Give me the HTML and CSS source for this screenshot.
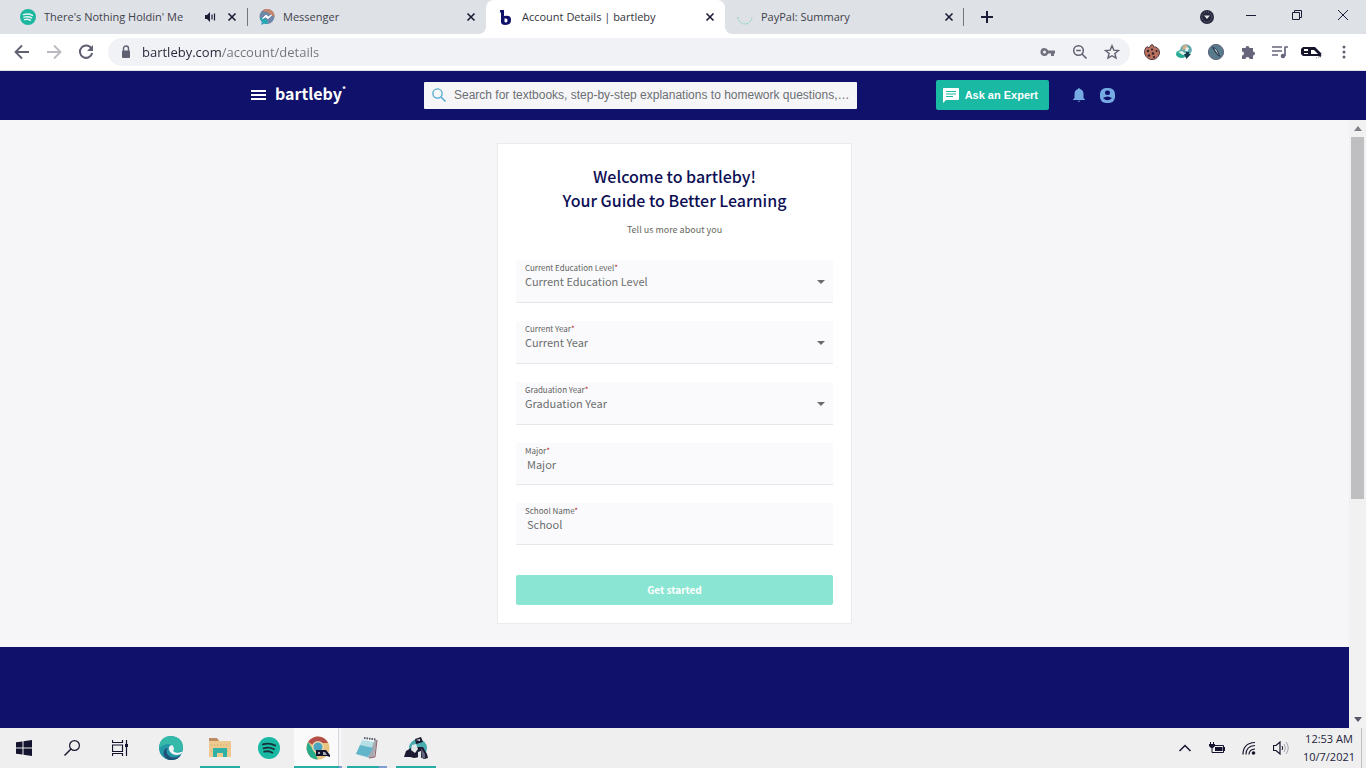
FILE: index.html
```html
<!DOCTYPE html>
<html lang="en">
<head>
  <meta charset="UTF-8">
  <meta name="viewport" content="width=device-width, initial-scale=1.0">
  <title>Account Details | bartleby</title>
  <link rel="stylesheet" href="styles.css">
</head>
<body>
  <!-- Tabs -->
  <div class="tab-strip">
    <div class="tab">
      <svg class="favicon" viewBox="0 0 16 16"><circle cx="8" cy="8" r="8" fill="#1db79f"/><path d="M3.500 5.600q5-1.400 9 .8M4 8.200q4.200-1.200 7.600.7M4.500 10.600q3.400-.9 6 .7" fill="none" stroke="#e8f5f5" stroke-width="1.400" stroke-linecap="round"/></svg>
      <span class="tab-title">There's Nothing Holdin' Me</span>
      <button class="icon-btn mute" aria-label="Mute tab"><svg width="12" height="12" viewBox="0 0 12 12"><path d="M1 4h2l3-3v10l-3-3h-2z" fill="#1d1b35"/><path d="M8 3.500v5M10.500 2.500v7" stroke="#1d1b35" stroke-width="1.200"/></svg></button>
      <button class="icon-btn close" aria-label="Close tab"><svg width="10" height="10" viewBox="0 0 10 10"><path d="M1.500 1.500l7 7M8.500 1.500l-7 7" stroke="#1d1b35" stroke-width="1.600"/></svg></button>
    </div>
    <div class="tab tab-line">
      <svg class="favicon" viewBox="0 0 16 16"><circle cx="8" cy="7.500" r="7.500" fill="#6f87a8"/><path d="M3 2a7.500 7.500 0 0 1 12.500 6L11 5 8 3z" fill="#c68468"/><path d="M.8 9a7.500 7.500 0 0 0 7.700 6v-4L4 9z" fill="#25a9b5"/><path d="M2.500 13v3l3-1.500z" fill="#3a9cc2"/><path d="M3.500 9.500l3.500-3.500 2.200 2 3.300-2-3.500 3.700-2.200-1.900z" fill="#fff" stroke="#fff"/></svg>
      <span class="tab-title">Messenger</span>
      <button class="icon-btn close" aria-label="Close tab"><svg width="10" height="10" viewBox="0 0 10 10"><path d="M1.500 1.500l7 7M8.500 1.500l-7 7" stroke="#1d1b35" stroke-width="1.600"/></svg></button>
    </div>
    <div class="tab tab-active">
      <svg class="favicon" viewBox="0 0 16 16"><path d="M2 1h4v6q7-1.500 7 4 0 5-5.500 5Q3 16 3 13V4L2 3zM6.500 9.500v3q0 1 1.500 1t1.500-2T8 9.500z" fill="#10116a" fill-rule="evenodd"/></svg>
      <span class="tab-title">Account Details | bartleby</span>
      <button class="icon-btn close" aria-label="Close tab"><svg width="10" height="10" viewBox="0 0 10 10"><path d="M1.500 1.500l7 7M8.500 1.500l-7 7" stroke="#1d1b35" stroke-width="1.600"/></svg></button>
    </div>
    <div class="tab tab-end">
      <svg class="favicon" viewBox="0 0 16 16"><path d="M1 8a7 7 0 0 0 14 0" fill="none" stroke="#7fd6bd" stroke-dasharray="2 1"/></svg>
      <span class="tab-title">PayPal: Summary</span>
      <button class="icon-btn close" aria-label="Close tab"><svg width="10" height="10" viewBox="0 0 10 10"><path d="M1.500 1.500l7 7M8.500 1.500l-7 7" stroke="#1d1b35" stroke-width="1.600"/></svg></button>
    </div>
    <button class="icon-btn new-tab" aria-label="New tab"><svg width="12" height="12" viewBox="0 0 12 12"><path d="M6 0v12M0 6h12" stroke="#1d1b35" stroke-width="2"/></svg></button>
    <div class="window-controls">
      <button class="icon-btn guest" aria-label="Tab search"><svg width="14" height="14" viewBox="0 0 14 14"><circle cx="7" cy="7" r="7" fill="#25253b"/><circle cx="7" cy="7" r="5" fill="none" stroke="#777b88" stroke-dasharray="1 1"/><path d="M4 5.500h6l-3 3.500z" fill="#e4e6eb"/></svg></button>
      <button class="icon-btn" aria-label="Minimize"><svg width="10" height="10" viewBox="0 0 10 10"><path d="M0 5.500h10" stroke="#1d1b35"/></svg></button>
      <button class="icon-btn" aria-label="Restore"><svg width="10" height="10" viewBox="0 0 10 10"><path d="M.5 2.500h7v7h-7zM2.500 2.500v-2h7v7h-2" fill="none" stroke="#1d1b35"/></svg></button>
      <button class="icon-btn" aria-label="Close"><svg width="10" height="10" viewBox="0 0 10 10"><path d="M0 0l10 10M10 0L0 10" stroke="#1d1b35"/></svg></button>
    </div>
  </div>

  <!-- Toolbar -->
  <div class="toolbar">
    <button class="icon-btn tool" aria-label="Back"><svg width="16" height="16" viewBox="0 0 16 16"><path d="M15 8H2M8 1.500L1.500 8 8 14.500" fill="none" stroke="#5f6071" stroke-width="1.800"/></svg></button>
    <button class="icon-btn tool" aria-label="Forward"><svg width="16" height="16" viewBox="0 0 16 16"><path d="M1 8h13M8 1.500L14.500 8 8 14.500" fill="none" stroke="#b9bac0" stroke-width="1.800"/></svg></button>
    <button class="icon-btn tool" aria-label="Reload"><svg width="16" height="16" viewBox="0 0 16 16"><path d="M13.500 4.500A6.200 6.200 0 1 0 14.200 9" fill="none" stroke="#5f6071" stroke-width="2"/><path d="M15 1v6H9z" fill="#5f6071"/></svg></button>
    <div class="address">
      <svg class="lock" width="10" height="14" viewBox="0 0 10 14"><path d="M2.500 6V3.500a2.500 2.500 0 0 1 5 0V6" fill="none" stroke="#5f6071" stroke-width="1.400"/><rect x="1" y="5.500" width="8" height="7.500" rx="1" fill="#5f6071"/></svg>
      <input class="url" type="text" aria-label="Address" value="bartleby.com/account/details">
      <button class="icon-btn tool" aria-label="Saved passwords"><svg width="16" height="16" viewBox="0 0 16 16"><path d="M4.500 4a4 4 0 1 0 3.700 5.400H11V12h3V9.400h1V6.600H8.200A4 4 0 0 0 4.500 4zm0 2.500a1.500 1.500 0 1 1 0 3 1.500 1.500 0 0 1 0-3z" fill="#70717c" fill-rule="evenodd"/></svg></button>
      <button class="icon-btn tool" aria-label="Zoom"><svg width="16" height="16" viewBox="0 0 16 16"><circle cx="6.500" cy="6.500" r="4.800" fill="none" stroke="#5f6071" stroke-width="1.500"/><path d="M4.200 6.500h4.600M10 10l4.500 4.500" stroke="#5f6071" stroke-width="1.600"/></svg></button>
      <button class="icon-btn tool" aria-label="Bookmark this page"><svg width="16" height="16" viewBox="0 0 16 16"><path d="M8 1.800l1.800 4.300 4.700.4-3.600 3 1.100 4.600L8 11.700l-4 2.400 1.100-4.600-3.600-3 4.700-.4z" fill="none" stroke="#5f6071" stroke-width="1.400"/></svg></button>
    </div>
    <button class="icon-btn tool" aria-label="Cookies extension"><svg width="16" height="16" viewBox="0 0 16 16"><path d="M7 1q2-1 2 0 0 3 3 2 4 2 3.500 6A7.500 7.500 0 1 1 3 2.500L5 4z" fill="#b9725f" stroke="#513a40"/><g fill="#33212c"><circle cx="4" cy="7" r="1.200"/><circle cx="8" cy="5.500" r="1.100"/><circle cx="9" cy="9.500" r="1.300"/><circle cx="12.500" cy="7" r="1"/><circle cx="5" cy="11.500" r="1.200"/><circle cx="10" cy="13" r="1.100"/></g></svg></button>
    <button class="icon-btn tool" aria-label="Download extension"><svg width="16" height="16" viewBox="0 0 16 16"><ellipse cx="5.500" cy="10" rx="5.500" ry="4" fill="#27ad95"/><circle cx="10" cy="6" r="5.800" fill="#5fa9ae"/><path d="M7 2q3-2 5 0l-2 3-4 1z" fill="#d9ae86"/><path d="M10 3l3 1-1 3-3 0z" fill="#e7f1f2"/><path d="M2 8l4-1 4 3-3 1z" fill="#e7eee9"/><path d="M8 10h2V8h3v2h2l-4.500 5z" fill="#173d4c"/></svg></button>
    <button class="icon-btn tool" aria-label="Notes extension"><svg width="16" height="16" viewBox="0 0 16 16"><circle cx="8" cy="8" r="7.600" fill="#587b8b" stroke="#5e6380"/><path d="M4.500 3l4 2.500 3.500 7-4-3z" fill="#eff3f5" stroke="#29394e"/><path d="M5 4l6 8" stroke="#29394e"/></svg></button>
    <button class="icon-btn tool" aria-label="Extensions"><svg width="16" height="16" viewBox="0 0 16 16"><path d="M2 4h3.500a2 2 0 1 1 4 0H13v3.500a2 2 0 1 1 0 4V15H9.500a2 2 0 0 0-4 0H2v-3.500a2 2 0 0 0 0-4z" fill="#66657c"/></svg></button>
    <button class="icon-btn tool" aria-label="Media controls"><svg width="16" height="16" viewBox="0 0 16 16"><path d="M0 3h10M0 7h10M0 11h6M13 3v9M12.300 3H16" stroke="#66657c" stroke-width="1.700"/><circle cx="11" cy="12" r="2.300" fill="#66657c"/></svg></button>
    <button class="icon-btn tool" aria-label="Profile"><svg width="22" height="16" viewBox="0 0 22 16"><path d="M2 3h12l6 6v4l-3-1H2L0 10V5z" fill="#17152c"/><path d="M3 5h4v2H3zM3 9h4v1H3zM10 6h3l4 4h-7z" fill="#fff"/><path d="M15 14l5-1 1-5" fill="none" stroke="#9b9da8" stroke-dasharray="1 1"/></svg></button>
    <button class="icon-btn tool" aria-label="Menu"><svg width="16" height="16" viewBox="0 0 16 16" fill="#5f6071"><circle cx="8" cy="3" r="1.500"/><circle cx="8" cy="8" r="1.500"/><circle cx="8" cy="13" r="1.500"/></svg></button>
  </div>

  <header class="site-header">
    <div class="header-inner">
      <button class="icon-btn menu-btn" aria-label="Open menu"><svg width="15" height="10" viewBox="0 0 15 10"><path d="M0 1h15M0 5h15M0 9h15" stroke="#fff" stroke-width="2"/></svg></button>
      <a class="logo" href="#">bartleby<span class="logo-mark">*</span></a>
      <div class="search">
        <svg width="14" height="14" viewBox="0 0 14 14"><circle cx="5.500" cy="5.500" r="4.600" fill="none" stroke="#4fa9cf" stroke-width="1.300"/><path d="M9 9l4.500 4.500" stroke="#4fa9cf" stroke-width="1.500"/></svg>
        <input class="search-input" type="text" aria-label="Search" placeholder="Search for textbooks, step-by-step explanations to homework questions, and more">
      </div>
      <button class="ask-btn">
        <svg width="16" height="15" viewBox="0 0 16 15"><path d="M1 0h14q1 0 1 1v10q0 1-1 1H3l-3 3V1q0-1 1-1z" fill="#fff"/><path d="M3 3.500h10M3 6h10M3 8.500h7" stroke="#19b9a3" stroke-width="1.200"/></svg>
        Ask an Expert
      </button>
      <button class="icon-btn bell" aria-label="Notifications"><svg width="12" height="14" viewBox="0 0 12 14" fill="#76aae2"><path d="M5 1q1-2 2 0 3.500 1 3.500 5v4L12 11.500v.5H0v-.5L1.500 10V6Q1.500 2 5 1zM4.500 12.700h3q-1.500 2-3 0z"/></svg></button>
      <button class="icon-btn user" aria-label="Account"><svg width="15" height="15" viewBox="0 0 15 15"><rect width="15" height="15" rx="6" fill="#76aae2"/><rect x="5" y="2.500" width="5" height="4.500" rx="2" fill="#10116a"/><path d="M3 10q4.500-3 9 0-4.500 4.500-9 0z" fill="#10116a"/></svg></button>
    </div>
  </header>

  <div class="viewport">
    <div class="page">
      <main>
        <form class="card">
          <h1>Welcome to bartleby!<br>Your Guide to Better Learning</h1>
          <p class="subtitle">Tell us more about you</p>

          <div class="fields">
            <div class="field">
              <label for="education">Current Education Level<span class="required">*</span></label>
              <div class="select-row">
                <select id="education"><option>Current Education Level</option></select>
                <svg width="8" height="4" viewBox="0 0 8 4"><path d="M0 0h8L4 4z" fill="#696b70"/></svg>
              </div>
            </div>
            <div class="field">
              <label for="year">Current Year<span class="required">*</span></label>
              <div class="select-row">
                <select id="year"><option>Current Year</option></select>
                <svg width="8" height="4" viewBox="0 0 8 4"><path d="M0 0h8L4 4z" fill="#696b70"/></svg>
              </div>
            </div>
            <div class="field">
              <label for="graduation">Graduation Year<span class="required">*</span></label>
              <div class="select-row">
                <select id="graduation"><option>Graduation Year</option></select>
                <svg width="8" height="4" viewBox="0 0 8 4"><path d="M0 0h8L4 4z" fill="#696b70"/></svg>
              </div>
            </div>
            <div class="field field-text">
              <label for="major">Major<span class="required">*</span></label>
              <input type="text" id="major" placeholder="Major">
            </div>
            <div class="field field-text">
              <label for="school">School Name<span class="required">*</span></label>
              <input type="text" id="school" placeholder="School">
            </div>
          </div>

          <button class="submit" type="button">Get started</button>
        </form>
      </main>
      <footer class="site-footer"></footer>
    </div>
    <div class="scrollbar">
      <svg width="8" height="5" viewBox="0 0 8 5"><path d="M4 0l4 5H0z" fill="#7f8186"/></svg>
      <div class="track"><div class="thumb"></div></div>
      <svg width="8" height="5" viewBox="0 0 8 5"><path d="M0 0h8L4 5z" fill="#55566a"/></svg>
    </div>
  </div>

  <!-- Windows taskbar -->
  <div class="taskbar">
    <button class="task" aria-label="Start"><svg width="16" height="16" viewBox="0 0 16 16" fill="#15142e"><path d="M0 2.300L6.500 1.400v6.100H0zM7.500 1.200L16 0v7.500H7.500zM0 8.500h6.500v6.100L0 13.700zM7.500 8.500H16V16l-8.500-1.200z"/></svg></button>
    <button class="task" aria-label="Search"><svg width="16" height="16" viewBox="0 0 16 16"><circle cx="10.500" cy="5.500" r="4.900" fill="none" stroke="#15142e" stroke-width="1.200"/><path d="M7 9L.5 15.500" stroke="#15142e" stroke-width="1.400"/></svg></button>
    <button class="task" aria-label="Task view"><svg width="16" height="16" viewBox="0 0 16 16"><path d="M.5 0v2.500h10V0M.5 5h10v6.500H.5zM.5 16v-2.500h10V16M14.500 0v16" fill="none" stroke="#15142e" stroke-width="1.200"/><path d="M13 4h3v3h-3z" fill="#15142e"/></svg></button>
    <div class="apps">
      <button class="task" aria-label="Edge"><svg width="24" height="24" viewBox="0 0 24 24"><circle cx="12" cy="12" r="12" fill="#2399a6"/><path d="M0 12Q1 0 12 0q11 1 12 10 0 6-6 6-4 0-4-1 2-2 0-5Q9 5 0 12z" fill="#35b9a8"/><path d="M9 12q-3 3 0 7 5 5 13 0-4 6-12 5Q3 21 5 15q1-3 4-3z" fill="#235079"/><path d="M13 9q-4 1-3 5 2 5 8 5 3 0 5-2l-1 2q3-4 0-3-5 2-8-1 2-2 0-5z" fill="#f1f4f4"/></svg></button>
      <button class="task running" aria-label="File Explorer"><svg width="22" height="20" viewBox="0 0 22 20"><path d="M0 1h9l1 2h12v16H0z" fill="#edc98f"/><path d="M0 0h8l2 3H0z" fill="#bd8c63"/><path d="M4 10h14v9h-4v-4H8v4H4z" fill="#2fb1a6"/><path d="M2 7h18M2 13h2M18 13h2" stroke="#d2a169" stroke-dasharray="1 2"/></svg></button>
      <button class="task" aria-label="Spotify"><svg width="22" height="22" viewBox="0 0 16 16"><circle cx="8" cy="8" r="8" fill="#19b9a3"/><path d="M3.500 5.400q5-1.400 9 .8M4 8.200q4.200-1.200 7.600.7M4.500 10.700q3.400-.9 6 .7" fill="none" stroke="#18323b" stroke-width="1.300" stroke-linecap="round"/></svg></button>
      <button class="task running current" aria-label="Chrome"><svg width="24" height="24" viewBox="0 0 24 24"><circle cx="12" cy="12" r="11.500" fill="#e9c480"/><path d="M12 12L2 6Q6 .5 12 .5q7 0 10 6.500H12z" fill="#b54f4c"/><path d="M2 6l6 9 4 8.500Q2 23 .5 13q0-4 1.500-7z" fill="#28ac8b"/><circle cx="12" cy="11" r="6" fill="#eed6a6"/><circle cx="12" cy="11" r="4.500" fill="#4ba6c2"/><path d="M10 14h10l4 5v2l-3-1H10z" fill="#15142e"/><path d="M12 16h2v2h-2zM17 16h2l2 3h-4z" fill="#a9abb4"/></svg></button>
      <button class="task running split" aria-label="Notepad"><svg width="24" height="24" viewBox="0 0 24 24"><path d="M9 2l13 2-3 17-6 1z" fill="#a9a9b0"/><path d="M8 2l12 1-7 19L1 18z" fill="#b4dfe6"/><path d="M5 9l13 3-5 9L1 18z" fill="#62b4c9"/><path d="M8 2l12 1-1 3L7 4z" fill="#f2f4f5"/><path d="M9 2l12 1.500" stroke="#555766" stroke-width="2" stroke-dasharray="1.500 1"/><path d="M22 4l-2 17-6 1" fill="none" stroke="#8e646c"/></svg></button>
      <button class="task running" aria-label="Game"><svg width="24" height="24" viewBox="0 0 24 24"><circle cx="14" cy="12" r="9" fill="#49adb0"/><path d="M11 3l6-2 2 5-7 2zM0 21l2-6 5-3 3 4 3-5 6 0 4 7 1 4-4 1-4-2-6 1-4-1z" fill="#1b1a31"/><path d="M8 9l4-1 2 5-3 4-4-3zM14 16l3-1v7h-3zM12 4l4-1v2z" fill="#e3e8eb"/><path d="M17 12l4 6v4h-3z" fill="#62647b"/></svg></button>
    </div>
    <div class="tray">
      <button class="tray-btn" aria-label="Show hidden icons"><svg width="12" height="8" viewBox="0 0 12 8"><path d="M.5 7L6 1.500 11.500 7" fill="none" stroke="#15142e" stroke-width="1.500"/></svg></button>
      <button class="tray-btn" aria-label="Battery"><svg width="16" height="12" viewBox="0 0 16 12"><path d="M4.500 3.500h10v7h-10" fill="none" stroke="#15142e"/><path d="M6 5h7.500v4H6zM15 5h1v4h-1zM0 2h6v2L4 6H2L0 4z" fill="#15142e"/><path d="M1.500 0v2M4.500 0v2M3 5v5.500h3" fill="none" stroke="#15142e"/></svg></button>
      <button class="tray-btn" aria-label="Wi-Fi"><svg width="14" height="14" viewBox="0 0 14 14"><path d="M1 13.500Q1 2 13 1.500M4 13.500Q4 5 13 4.500M7 13.500Q7 8.500 13 8" fill="none" stroke="#15142e" stroke-width="1.200"/><circle cx="11.500" cy="12" r="1.800" fill="#15142e"/></svg></button>
      <button class="tray-btn" aria-label="Volume"><svg width="16" height="14" viewBox="0 0 16 14"><path d="M.5 4.500H3l4-3.500v12L3 9.500H.5z" fill="none" stroke="#15142e" stroke-width="1.200"/><path d="M9 5q1.500 2 0 4" fill="none" stroke="#15142e"/><path d="M11 3q3 4 0 8M13 1q4.500 6 0 12" fill="none" stroke="#a4a5ad"/></svg></button>
      <div class="clock">12:53 AM<br>10/7/2021</div>
    </div>
  </div>
</body>
</html>
```
FILE: styles.css
```css
* {
  box-sizing: border-box;
}
body {
  margin: 0;
  height: 100vh;
  display: flex;
  flex-direction: column;
  font-family: "Noto Sans CJK SC", "Noto Sans", sans-serif;
  overflow: hidden;
}
button, input, select {
  font-family: inherit;
  margin: 0;
}
svg {
  display: block;
  flex: none;
}
.icon-btn {
  display: flex;
  align-items: center;
  justify-content: center;
  flex: none;
  padding: 0;
  border: none;
  background: none;
  cursor: pointer;
}

/* Tabs */
.tab-strip {
  display: flex;
  height: 34px;
  padding-left: 8px;
  background: #dee1e6;
  font-family: "Open Sans", sans-serif;
}
.tab {
  position: relative;
  display: flex;
  align-items: center;
  flex: 0 1 239px;
  min-width: 0;
  padding: 0 7px 0 12px;
  font-size: 11px;
  color: #3f414b;
}
.tab-line::before,
.tab-end::after {
  content: "";
  position: absolute;
  left: 0;
  top: 8px;
  width: 1px;
  height: 18px;
  background: #74767f;
}
.tab-end::after {
  left: auto;
  right: 0;
}
.tab-active {
  background: #fff;
  border-radius: 8px 8px 0 0;
  color: #33353d;
}
.tab-active::before,
.tab-active::after {
  content: "";
  position: absolute;
  bottom: 0;
  width: 8px;
  height: 8px;
}
.tab-active::before {
  right: 100%;
  background: radial-gradient(circle at 0 0, #dee1e6 8px, #fff 8px);
}
.tab-active::after {
  left: 100%;
  background: radial-gradient(circle at 100% 0, #dee1e6 8px, #fff 8px);
}
.favicon {
  width: 16px;
  height: 16px;
  margin-right: 8px;
}
.tab-title {
  flex: 1;
  min-width: 0;
  padding-bottom: 2px;
  overflow: hidden;
  white-space: nowrap;
}
.close {
  width: 16px;
  height: 16px;
}
.mute {
  margin: 0 8px;
}
.new-tab {
  width: 46px;
}
.window-controls {
  display: flex;
  height: 29px;
  margin-left: auto;
}
.window-controls .icon-btn {
  width: 46px;
}
.window-controls .guest {
  width: 42px;
  height: 34px;
}

/* Toolbar */
.toolbar {
  display: flex;
  align-items: center;
  height: 37px;
  padding: 0 6px;
  background: #fff;
  border-bottom: 1px solid #dfe1e8;
}
.tool {
  width: 32px;
  height: 28px;
}
.address {
  display: flex;
  align-items: center;
  flex: 1;
  min-width: 0;
  height: 28px;
  margin: 0 6px;
  padding: 0 2px 0 13px;
  border-radius: 14px;
  background: #f1f2f5;
}
.lock {
  margin-right: 11px;
}
.url {
  flex: 1;
  min-width: 0;
  padding: 0;
  border: none;
  font-family: "Open Sans", sans-serif;
  font-size: 13px;
  /* host name dark, path grey */
  background: linear-gradient(to right, #25263a 80px, #70737b 80px);
  -webkit-background-clip: text;
  background-clip: text;
  color: transparent;
}

/* Site header */
.site-header {
  padding: 0 24px 1px;
  background: #10116a;
}
.header-inner {
  display: flex;
  align-items: center;
  max-width: 864px;
  height: 48px;
  margin: 0 auto;
}
.menu-btn {
  margin-right: 9px;
}
.logo {
  display: flex;
  width: 69px;
  padding-bottom: 4px;
  font-size: 16px;
  font-weight: bold;
  line-height: 24px;
  color: #fff;
  text-decoration: none;
}
.logo-mark {
  font-size: 8px;
  line-height: 16px;
}
.search {
  display: flex;
  align-items: center;
  flex: 0 1 433px;
  min-width: 0;
  height: 27px;
  margin-left: 80px;
  padding: 0 7px 0 8px;
  background: #f6f6f8;
  border-radius: 1px;
}
.search-input {
  flex: 1;
  min-width: 0;
  margin-left: 8px;
  padding: 0;
  border: none;
  background: none;
  font-family: "Liberation Sans", Arial, sans-serif;
  font-size: 12px;
  text-overflow: ellipsis;
}
.search-input::placeholder {
  color: #6c6f73;
}
.ask-btn {
  display: flex;
  align-items: center;
  gap: 6px;
  height: 30px;
  margin-left: auto;
  padding: 0 11px 0 7px;
  border: none;
  border-radius: 2px;
  background: #19b9a3;
  color: #fff;
  font-family: "Liberation Sans", Arial, sans-serif;
  font-size: 11px;
  font-weight: bold;
  white-space: nowrap;
}
.bell {
  margin-left: 24px;
}
.user {
  margin-left: 15px;
}

/* Page */
.viewport {
  display: flex;
  flex: 1;
  min-height: 0;
}
.page {
  display: flex;
  flex-direction: column;
  flex: 1;
  min-width: 0;
  overflow: hidden;
  background: #f6f6f8;
}
main {
  padding: 23px 16px;
}
.card {
  max-width: 355px;
  margin: 0 auto;
  padding: 20px 18px 18px;
  border: 1px solid #ebebed;
  background: #fff;
}
h1 {
  margin: 0;
  font-size: 16px;
  font-weight: 500;
  line-height: 24px;
  color: #0d0f55;
  text-align: center;
}
.subtitle {
  margin: 9px 0 22px;
  font-size: 9px;
  line-height: 17px;
  color: #66695f;
  text-align: center;
}
.fields {
  display: flex;
  flex-direction: column;
  gap: 18px;
}
.field {
  height: 43px;
  padding: 2px 8px 0 9px;
  border-bottom: 1px solid #e6e7e9;
  background: #fafafc;
}
.field-text {
  height: 42px;
}
.field label {
  display: block;
  font-size: 8px;
  line-height: 12px;
  color: #5f625f;
}
.required {
  color: #b3261e;
}
.select-row {
  display: flex;
  align-items: center;
}
.field select,
.field input {
  display: block;
  flex: 1;
  width: 100%;
  min-width: 0;
  height: 16px;
  padding: 0 0 2px;
  border: none;
  background: none;
  font-size: 11px;
  line-height: 14px;
  color: #6c6f6f;
  appearance: none;
}
.field input {
  padding-left: 2px;
}
.field input::placeholder {
  color: #6c6f6f;
}
.submit {
  display: block;
  width: 100%;
  height: 30px;
  margin-top: 30px;
  padding: 0 0 2px;
  border: none;
  border-radius: 2px;
  background: #8be5d3;
  color: #fff;
  font-size: 10px;
  font-weight: bold;
}
.site-footer {
  flex: 1;
  background: #10116a;
}

/* Scrollbar */
.scrollbar {
  display: flex;
  flex-direction: column;
  align-items: center;
  width: 17px;
  padding: 6px 0;
  background: #f1f1f2;
}
.track {
  flex: 1;
  width: 13px;
  margin: 6px 0;
}
.thumb {
  height: 63%;
  background: #bfbfc1;
}

/* Taskbar */
.taskbar {
  display: flex;
  height: 40px;
  background: #efefef;
}
.apps {
  display: flex;
  gap: 1px;
  margin-left: 3px;
}
.task {
  position: relative;
  display: flex;
  align-items: center;
  justify-content: center;
  width: 48px;
  height: 40px;
  padding: 0;
  border: none;
  background: none;
}
.running::after {
  content: "";
  position: absolute;
  left: 4px;
  right: 4px;
  bottom: 0;
  height: 2px;
  background: #27ada6;
}
.current {
  background: linear-gradient(to right, #fafafb 44px, #d5d6df 44px, #d5d6df 45px, #f5f5f6 45px);
}
.current::after {
  left: 0;
  right: 0;
  background: linear-gradient(to right, #27ada6 45px, #7f9cd0 45px);
}
.split::after {
  background: linear-gradient(to right, #27ada6 32px, #7f9cd0 32px);
}
.tray {
  display: flex;
  align-items: center;
  margin-left: auto;
  margin-right: 4px;
}
.tray-btn {
  display: flex;
  align-items: center;
  justify-content: center;
  width: 32px;
  height: 40px;
  padding: 0;
  border: none;
  background: none;
}
.clock {
  width: 65px;
  height: 40px;
  padding: 2px 0;
  border-right: 1px solid #bfc0c4;
  font-family: "Open Sans", sans-serif;
  font-size: 11px;
  line-height: 18px;
  color: #22223a;
  text-align: center;
  white-space: nowrap;
}
```
